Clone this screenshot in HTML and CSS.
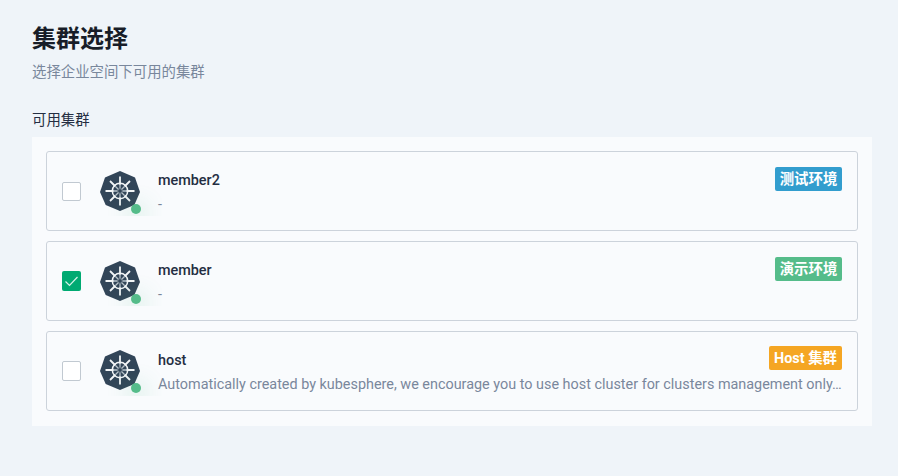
FILE: index.html
```html
<!DOCTYPE html>
<html lang="zh-CN">
<head>
<meta charset="utf-8">
<title>集群选择</title>
<link rel="stylesheet" href="styles.css">
</head>
<body>
<svg class="sprite" aria-hidden="true">
  <symbol id="kube" viewBox="0 0 40 40">
    <path fill="#324558" d="M20 0 35 6.5 40 21 34.3 34 20 40 5.7 34 0 21 5 6.5Z"/>
    <g fill="none" stroke="#f2f5f7">
      <circle cx="20" cy="20" r="7.7" stroke-width="1.5"/>
      <path stroke-width="1.8" d="M20 5.5V14M20 26V34.5M5.5 20H14M26 20H34.5M10 10l5.5 5.5M24.5 24.5 30 30M30 10l-5.5 5.5M15.500 24.500 10 30"/>
      <path stroke="#b9c3cb" stroke-width="1.3" d="M20 13v4.500M20 22.500V27M13 20h4.500M22.500 20H27M15.500 15.500l3 3M21.500 21.500l3 3M24.500 15.500l-3 3M18.500 21.500l-3 3"/>
      <circle cx="20" cy="20" r="2.300" stroke="#8895a1" stroke-width=".8"/>
    </g>
  </symbol>
</svg>
<main class="page">
  <h1 class="title">集群选择</h1>
  <p class="subtitle">选择企业空间下可用的集群</p>
  <div class="label">可用集群</div>
  <section class="panel">
    <article class="card">
      <span class="checkbox"></span>
      <div class="logo"><svg class="kube"><use href="#kube"/></svg><i class="status"></i></div>
      <div class="info"><div class="name">member2</div><div class="desc">-</div></div>
      <span class="tag tag-test">测试环境</span>
    </article>
    <article class="card">
      <span class="checkbox checked"><svg viewBox="0 0 19 20"><path d="M3.500 10.500 7.500 14.500 15.500 6"/></svg></span>
      <div class="logo"><svg class="kube"><use href="#kube"/></svg><i class="status"></i></div>
      <div class="info"><div class="name">member</div><div class="desc">-</div></div>
      <span class="tag tag-demo">演示环境</span>
    </article>
    <article class="card card-host">
      <span class="checkbox"></span>
      <div class="logo"><svg class="kube"><use href="#kube"/></svg><i class="status"></i></div>
      <div class="info"><div class="name">host</div><div class="desc">Automatically created by kubesphere, we encourage you to use host cluster for clusters management only…</div></div>
      <span class="tag tag-host">Host 集群</span>
    </article>
  </section>
</main>
</body>
</html>
```
FILE: styles.css
```css
* { box-sizing: border-box; }
body {
  margin: 0;
  min-height: 476px;
  background: #eff4f9;
  color: #242e42;
  font: 14.4px/20px Roboto, "Noto Sans CJK SC", sans-serif;
}
.sprite { position: absolute; width: 0; height: 0; }
.page { padding: 23px 26px 50px 32px; }
.title { margin: 0; color: #181d28; font-size: 24px; line-height: 32px; font-weight: 700; }
.subtitle { margin: 8px 0 0; color: #79879c; }
.label { margin-top: 28px; }
.panel {
  display: flex;
  flex-direction: column;
  gap: 10px;
  width: 840px;
  margin-top: 6px;
  padding: 14px 14px 15px;
  background: #f9fbfd;
}
.card {
  position: relative;
  display: flex;
  align-items: flex-start;
  height: 80px;
  padding: 15px;
  border: 1px solid #ccd3db;
  border-radius: 3px;
}
.checkbox {
  flex: none;
  width: 19px;
  height: 19px;
  margin-top: 15px;
  border: 1px solid #c1c9d1;
  border-radius: 2px;
  background: #fff;
}
.checkbox.checked { height: 20px; margin-top: 14px; border: 0; background: #00aa72; }
.checked svg { display: block; width: 19px; height: 20px; fill: none; stroke: #d5f2e7; stroke-width: 1.200; }
.logo {
  position: relative;
  flex: none;
  width: 64px;
  height: 49px;
  margin-left: 17px;
  padding: 4px 2px;
  overflow: hidden;
}
.kube { display: block; width: 40px; height: 40px; }
.status {
  position: absolute;
  left: 33px;
  top: 37px;
  width: 10px;
  height: 10px;
  border-radius: 50%;
  background: #55bc8a;
  box-shadow: 0 4px 22px 2px rgba(85, 188, 138, .45);
}
.info { flex: 1; min-width: 0; margin-left: -4px; }
.name { margin-top: 4px; font-weight: 500; }
.desc { margin-top: 4px; color: #79879c; white-space: nowrap; }
.tag {
  position: absolute;
  right: 15px;
  top: 15px;
  width: 67px;
  height: 24px;
  padding-top: 1px;
  border-radius: 2px;
  color: #fff;
  font-weight: 700;
  line-height: 24px;
  text-align: center;
}
.tag-test { background: #329dce; }
.tag-demo { background: #55bc8a; }
.tag-host { width: 73px; background: #f5a623; }
.card-host .tag { top: 14px; }
.card-host .logo { height: 50px; margin-top: -1px; }
.card-host .checkbox { height: 20px; margin-top: 14px; }
```
